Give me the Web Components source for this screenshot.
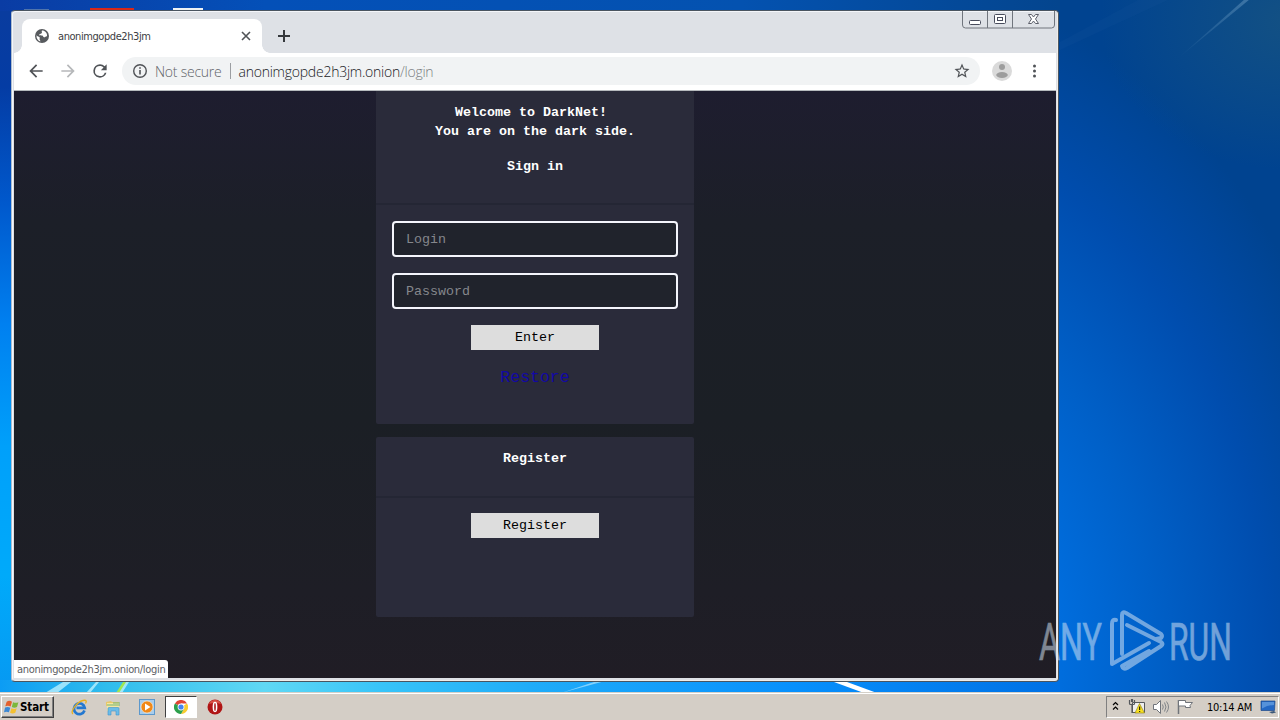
<!DOCTYPE html>
<html lang="en">
<head>
<meta charset="utf-8">
<title>Desktop</title>
<style>
  body {
    margin: 0;
    width: 1280px;
    height: 720px;
    overflow: hidden;
    font-family: "DejaVu Sans Condensed", "DejaVu Sans", sans-serif;
  }
</style>
</head>
<body>
<win-desktop>
  <browser-window slot="window" status="anonimgopde2h3jm.onion/login">
    <browser-tab slot="tab">anonimgopde2h3jm</browser-tab>
    <address-bar slot="address" label="Not secure" host="anonimgopde2h3jm.onion" path="/login"></address-bar>
    <login-page>
      <form-card class="signin">
        <div slot="head">Welcome to DarkNet!&nbsp;<br>You are on the dark side.</div>
        <div slot="sub">Sign in</div>
        <form-field placeholder="Login"></form-field>
        <form-field placeholder="Password"></form-field>
        <form-button>Enter</form-button>
        <a slot="link">Restore</a>
      </form-card>
      <form-card class="register">
        <div slot="head">Register</div>
        <form-button>Register</form-button>
      </form-card>
    </login-page>
  </browser-window>
  <run-mark slot="mark"></run-mark>
  <task-bar slot="taskbar" time="10:14 AM"></task-bar>
</win-desktop>

<script>
/** Small base class: every element renders its own styles and markup. */
class BaseElement extends HTMLElement {
  constructor() {
    super();
    this.attachShadow({ mode: 'open' });
  }

  connectedCallback() {
    this.shadowRoot.innerHTML = `<style>${this.getStyles()}</style>${this.getMarkup()}`;
  }
}

class WinDesktop extends BaseElement {
  getStyles() {
    return `
      :host {
        display: flex;
        flex-direction: column;
        position: relative;
        width: 1280px;
        height: 720px;
        overflow: hidden;
        background:
          radial-gradient(ellipse 190px 150px at 1290px 20px, rgba(24, 84, 128, 0.8), transparent),
          radial-gradient(ellipse 500px 680px at 880px 660px, #0084f4 0%, #0070e2 32%, #0060c8 55%, #004dae 78%, #004390 100%);
      }
      .wall { position: absolute; left: 0; top: 0; }
      .space { flex: 1; position: relative; }
      ::slotted([slot="window"]) { position: absolute; left: 11px; top: 10px; }
      ::slotted([slot="mark"]) { position: absolute; left: 1036px; top: 606px; }
    `;
  }

  getMarkup() {
    return `
      <svg class="wall" width="1280" height="720">
        <defs>
          <linearGradient id="left" x1="0" y1="0" x2="0" y2="1">
            <stop offset="0" stop-color="#0a3c9e"/><stop offset=".12" stop-color="#043ca4"/>
            <stop offset=".28" stop-color="#0058cc"/><stop offset=".45" stop-color="#0080f0"/>
            <stop offset=".62" stop-color="#00a0fa"/><stop offset=".8" stop-color="#00aafa"/>
            <stop offset="1" stop-color="#0894f0"/>
          </linearGradient>
          <linearGradient id="top">
            <stop offset="0" stop-color="#0a3ca4"/><stop offset=".25" stop-color="#0450b8"/>
            <stop offset=".7" stop-color="#0452b0"/><stop offset="1" stop-color="#04458e"/>
          </linearGradient>
          <linearGradient id="bottom">
            <stop offset="0" stop-color="#0c9cf4"/><stop offset=".1" stop-color="#30bcec"/>
            <stop offset=".25" stop-color="#60d8f4"/><stop offset=".36" stop-color="#38c4f8"/>
            <stop offset=".5" stop-color="#20acf8"/><stop offset=".75" stop-color="#0890fc"/>
            <stop offset="1" stop-color="#0070e4"/>
          </linearGradient>
          <linearGradient id="ray" x1="0" y1="1" x2="1" y2="0">
            <stop offset="0" stop-color="#6c9cc4" stop-opacity="0"/><stop offset="1" stop-color="#6c9cc4" stop-opacity=".5"/>
          </linearGradient>
        </defs>
        <rect width="12" height="720" fill="url(#left)"/>
        <rect width="1060" height="11" fill="url(#top)"/>
        <rect y="680" width="1060" height="14" fill="url(#bottom)"/>
        <path d="M1060 42l78-42h30L1060 50z" fill="#3c7cb4" opacity=".06"/>
        <path d="M1176 60L1245 -1h5z" fill="url(#ray)"/>
        <path d="M45 693l18-11h8l-14 11zM86 693l10-11h3l-9 11zM118 693l7-11h4l-7 11z" fill="#c4f4ff" opacity=".75"/>
        <path d="M116 693l7-11h3l-7 11z" fill="#a0e850"/>
        <path d="M561 693l36-12h8z" fill="#aee4ff" opacity=".7"/>
        <path d="M834 682h13l30 11h-13z" fill="#fff"/>
        <path d="M24 10h25" stroke="#98aab0"/>
        <path d="M90 9h44" stroke="#d82818" stroke-width="2"/>
        <path d="M173 9h30" stroke="#eef2f4" stroke-width="2"/>
      </svg>
      <div class="space"><slot name="window"></slot></div>
      <slot name="taskbar"></slot>
      <slot name="mark"></slot>
    `;
  }
}

class BrowserWindow extends BaseElement {
  getStyles() {
    return `
      :host {
        display: flex;
        flex-direction: column;
        box-sizing: border-box;
        width: 1048px;
        height: 672px;
        padding: 0 2px 3px;
        border: 1px solid #4a5560;
        border-radius: 4px;
        border-left-color: #aebccc;
        background: #dee1e6;
        box-shadow: inset 1px 1px 0 #f4f6fa, inset -1px -1px 0 #f0ece8;
      }
      .strip { display: flex; height: 42px; align-items: flex-end; }
      .plus { width: 14px; height: 14px; margin: 0 0 10px 15px; }
      .controls { margin: 0 1px auto auto; height: 18px; }
      .tools {
        display: flex;
        align-items: center;
        height: 37px;
        box-sizing: border-box;
        padding-left: 12px;
        background: #fff;
        border-bottom: 1px solid #fff;
      }
      .tools svg { flex: none; }
      .tools svg.nav { margin-right: 12px; }
      ::slotted([slot="address"]) { flex: none; margin-right: 12px; }
      .dots { margin-left: 19px; }
      .page {
        flex: 1;
        position: relative;
        display: flex;
        border-top: 1px solid #b6babd;
        overflow: hidden;
      }
      .status {
        position: absolute;
        left: 0;
        bottom: 0;
        height: 18px;
        width: 154px;
        box-sizing: border-box;
        padding-left: 3px;
        border-radius: 0 3px 0 0;
        background: #fff;
        color: #5c6064;
        font-size: 11px;
        line-height: 19px;
        letter-spacing: -0.32px;
        white-space: nowrap;
      }
    `;
  }

  getMarkup() {
    return `
      <div class="strip">
        <slot name="tab"></slot>
        <svg class="plus" viewBox="0 0 14 14"><path d="M7 1v12M1 7h12" stroke="#35383c" stroke-width="2"/></svg>
        <svg class="controls" width="93" height="18" viewBox="0 0 93 18" fill="none">
          <path d="M.5 0v14q0 3 3 3h86q3 0 3-3V0M25.500 0v17M50.500 0v17" stroke="#70757d"/>
          <rect x="7.500" y="9.500" width="11" height="4" rx="1" fill="#fff" stroke="#484c5c"/>
          <rect x="32.500" y="3.500" width="11" height="9" rx="1" fill="#fff" stroke="#484c5c"/>
          <rect x="35.500" y="6.500" width="5" height="3" stroke="#484c5c"/>
          <path d="M66.500 3.500h3l2 2.500 2-2.500h3l-3 4.500 3 4.500h-3l-2-2.500-2 2.500h-3l3-4.500z" fill="#fff" stroke="#5c5f6a"/>
        </svg>
      </div>
      <div class="tools">
        <svg class="nav" width="20" height="20" viewBox="0 0 24 24" fill="#505357"><path d="M20 11H7.830l5.590-5.590L12 4l-8 8 8 8 1.410-1.410L7.830 13H20z"/></svg>
        <svg class="nav" width="20" height="20" viewBox="0 0 24 24" fill="#b6b8ba"><path d="M12 4l-1.410 1.410L16.170 11H4v2h12.170l-5.580 5.590L12 20l8-8z"/></svg>
        <svg class="nav" width="20" height="20" viewBox="0 0 24 24" fill="#505357"><path d="M17.650 6.350A7.960 7.960 0 0 0 12 4a8 8 0 1 0 7.730 10h-2.080A6 6 0 1 1 12 6c1.660 0 3.140.69 4.220 1.780L13 11h7V4z"/></svg>
        <slot name="address"></slot>
        <svg width="20" height="20" viewBox="0 0 20 20">
          <circle cx="10" cy="10" r="10" fill="#dadada"/>
          <circle cx="10" cy="6" r="3" fill="#9d9d9d"/>
          <ellipse cx="10" cy="14" rx="5.800" ry="2.900" fill="#9d9d9d"/>
        </svg>
        <svg class="dots" width="6" height="16" viewBox="0 0 6 16" fill="#505357"><circle cx="3.500" cy="3" r="1.500"/><circle cx="3.500" cy="8" r="1.500"/><circle cx="3.500" cy="13" r="1.500"/></svg>
      </div>
      <div class="page">
        <slot></slot>
        <div class="status">${this.getAttribute('status')}</div>
      </div>
    `;
  }
}

class BrowserTab extends BaseElement {
  getStyles() {
    return `
      :host {
        display: flex;
        align-items: center;
        position: relative;
        box-sizing: border-box;
        width: 240px;
        height: 34px;
        margin-left: 8px;
        padding: 0 10px 0 12px;
        border-radius: 8px 8px 0 0;
        background: #fff;
        color: #3c4043;
        font-size: 11px;
        letter-spacing: -0.43px;
      }
      :host::before, :host::after {
        content: "";
        position: absolute;
        bottom: 0;
        width: 8px;
        height: 8px;
      }
      :host::before { left: -8px; background: radial-gradient(circle at 0 0, transparent 7.5px, #fff 8px); }
      :host::after { right: -8px; background: radial-gradient(circle at 100% 0, transparent 7.5px, #fff 8px); }
      span { flex: 1; margin-left: 8px; }
    `;
  }

  getMarkup() {
    return `
      <svg width="16" height="16" viewBox="0 0 16 16">
        <circle cx="8" cy="8" r="7" fill="#575a5e"/>
        <path d="M8 2.500c-1 1 .8 1.800-.4 2.700C6.500 6 5.300 5.700 5.200 6.700c0 .9 1.900.4 3.200.9 1 .4.500 1.600 1.700 1.700 1.400.2 1.200-1.300 2.900-1.100.5-3-2-5.700-5-5.700zM2.500 7.300c.8 1.600 2.400 1 3.100 2 .6 1-.6 1.600.3 2.600.5.500.4 1.200.5 1.600-2.400-.6-4.200-2.900-3.900-6.200z" fill="#fff"/>
      </svg>
      <span><slot></slot></span>
      <svg width="12" height="12" viewBox="0 0 12 12"><path d="M2 2l8 8M10 2l-8 8" stroke="#505357" stroke-width="1.600"/></svg>
    `;
  }
}

class AddressBar extends BaseElement {
  getStyles() {
    return `
      :host {
        display: flex;
        align-items: center;
        box-sizing: border-box;
        width: 858px;
        height: 28px;
        padding: 0 9px 0 10px;
        border-radius: 14px;
        background: #f1f3f4;
        color: #202124;
        font: 300 14px "Open Sans", "Noto Sans", sans-serif;
        letter-spacing: -0.24px;
        white-space: nowrap;
      }
      .label { margin-left: 7px; color: #5f6368; }
      .rule { width: 1px; height: 16px; margin: 0 8px; background: #9b9ea2; }
      .path { color: #7b7f83; }
      .star { margin-left: auto; }
    `;
  }

  getMarkup() {
    return `
      <svg width="16" height="16" viewBox="0 0 16 16" fill="none" stroke="#505357" stroke-width="1.400">
        <circle cx="8" cy="8" r="6.300"/><path d="M8 7v4.500M8 4.300v1.500" stroke-width="1.600"/>
      </svg>
      <span class="label">${this.getAttribute('label')}</span>
      <span class="rule"></span>
      <span class="host">${this.getAttribute('host')}</span><span class="path">${this.getAttribute('path')}</span>
      <svg class="star" width="18" height="18" viewBox="0 0 24 24" fill="#505357">
        <path d="M22 9.240l-7.190-.62L12 2 9.190 8.630 2 9.240l5.460 4.730L5.820 21 12 17.270 18.180 21l-1.630-7.030zM12 15.400l-3.760 2.270 1-4.280-3.320-2.880 4.380-.38L12 6.100l1.710 4.040 4.380.38-3.320 2.880 1 4.280z"/>
      </svg>
    `;
  }
}

class LoginPage extends BaseElement {
  getStyles() {
    return `
      :host {
        flex: 1;
        display: flex;
        flex-direction: column;
        align-items: center;
        gap: 13px;
        background: linear-gradient(#1e1d2f 0, #1c1f28 130px, #1b1f25 330px, #1e1e26 500px, #201d25 100%);
        font-family: "Liberation Mono", "Courier New", monospace;
        font-size: 13.333px;
      }
    `;
  }

  getMarkup() {
    return `<slot></slot>`;
  }
}

class FormCard extends BaseElement {
  getStyles() {
    return `
      :host {
        display: flex;
        flex-direction: column;
        width: 318px;
        background: #2a2b3a;
        border-radius: 0 0 2px 2px;
      }
      :host(.signin) { height: 333px; }
      :host(.register) { height: 180px; border-radius: 2px; }
      header {
        box-sizing: border-box;
        height: 114px;
        padding-top: 12px;
        border-bottom: 2px solid #242634;
        color: #fff;
        font-weight: bold;
        line-height: 19px;
        text-align: center;
      }
      :host(.register) header { height: 61px; }
      ::slotted([slot="sub"]) { margin-top: 16px; }
      .body {
        display: flex;
        flex-direction: column;
        align-items: center;
        gap: 16px;
        padding-top: 16px;
      }
      :host(.register) .body { padding-top: 15px; }
      ::slotted([slot="link"]) { margin-top: 2px; color: #1208a4; font-size: 16.500px; line-height: 20px; }
    `;
  }

  getMarkup() {
    return `
      <header><slot name="head"></slot><slot name="sub"></slot></header>
      <div class="body"><slot></slot><slot name="link"></slot></div>
    `;
  }
}

class FormField extends BaseElement {
  getStyles() {
    return `
      :host { display: block; }
      input {
        display: block;
        box-sizing: border-box;
        width: 286px;
        height: 36px;
        padding: 0 12px;
        border: 2px solid #f4f5fc;
        border-radius: 4px;
        background: #20232c;
        color: #fff;
        font: inherit;
      }
      input::placeholder { color: #85878c; }
    `;
  }

  getMarkup() {
    return `<input placeholder="${this.getAttribute('placeholder')}">`;
  }
}

class FormButton extends BaseElement {
  getStyles() {
    return `
      :host { display: block; }
      button {
        display: block;
        width: 128px;
        height: 25px;
        padding: 0;
        border: 0;
        background: #dddddd;
        color: #000;
        font: inherit;
      }
    `;
  }

  getMarkup() {
    return `<button><slot></slot></button>`;
  }
}

class RunMark extends BaseElement {
  getStyles() {
    return `
      :host { display: block; opacity: 0.53; }
      svg { display: block; }
      text { font: 400 51px Roboto, sans-serif; fill: #d5e4f4; stroke: #d5e4f4; stroke-width: 0.6px; }
    `;
  }

  getMarkup() {
    return `
      <svg width="244" height="72" viewBox="0 0 244 72" overflow="visible">
        <text x="3" y="54" textLength="63" lengthAdjust="spacingAndGlyphs">ANY</text>
        <text x="133" y="54" textLength="63" lengthAdjust="spacingAndGlyphs">RUN</text>
        <g fill="none" stroke="#d5e4f4" stroke-width="4" stroke-linejoin="round" stroke-linecap="round">
          <path d="M80 14q-4-1-4 4v40L113 37"/>
          <path d="M86 48V9q0-4 4-2L125 28q2 2 0 4l-5 1"/>
          <path d="M91 19L125 36q3 2 0 4L91 62q-4 2-5-2L113 45"/>
        </g>
      </svg>
    `;
  }
}

class TaskBar extends BaseElement {
  getStyles() {
    return `
      :host {
        display: flex;
        align-items: center;
        position: relative;
        box-sizing: border-box;
        height: 28px;
        padding: 1px 1px 0 1px;
        border-top: 1px solid #d4d0c8;
        background: #d4cec6;
        box-shadow: inset 0 1px 0 #fff;
        color: #000;
        font-size: 11px;
      }
      .start {
        display: flex;
        align-items: center;
        box-sizing: border-box;
        width: 53px;
        height: 22px;
        padding-left: 2px;
        border: 1px solid;
        border-color: #fff #404040 #404040 #fff;
        box-shadow: inset -1px -1px 0 #808080;
        font-size: 11.5px;
        font-weight: bold;
        letter-spacing: -0.1px;
      }
      .apps { display: flex; align-items: center; margin-left: 17px; }
      .apps svg { display: block; margin-right: 17px; }
      .active {
        display: flex;
        align-items: center;
        justify-content: center;
        box-sizing: border-box;
        width: 32px;
        height: 22px;
        margin: 0 10px 0 -8px;
        border: 1px solid;
        border-color: #404040 #fff #fff #404040;
        background: #fff;
      }
      .apps .active svg { margin: 0; }
      .tray {
        display: flex;
        align-items: center;
        box-sizing: border-box;
        width: 173px;
        height: 22px;
        margin-left: auto;
        border: 1px solid;
        border-color: #808080 #fff #fff #808080;
      }
      .time { margin-left: 14px; width: 47px; letter-spacing: -0.25px; white-space: nowrap; }
      .peek { margin-left: 5px; }
    `;
  }

  getMarkup() {
    return `
      <div class="start">
        <svg width="16" height="16" viewBox="0 0 15 15">
          <path d="M2.500 2.500q2.500-1.500 5 0L6.200 7q-2.500-1.400-5-.2z" fill="#e4602c"/>
          <path d="M8.500 3q2.500 1.200 5 0l-1.300 4.500q-2.400 1.300-4.900 0z" fill="#7cb83c"/>
          <path d="M1 8q2.500-1.300 4.900.2L4.600 12.500q-2.400-1.300-4.600 0z" fill="#3c88d4"/>
          <path d="M7 8.700q2.500 1.200 4.900 0L10.600 13q-2.500 1.300-4.900 0z" fill="#f4c030"/>
        </svg>Start
      </div>
      <div class="apps">
        <svg width="17" height="17" viewBox="0 0 17 17">
          <path d="M13.500 11.500A5.400 5.400 0 1 1 13.700 8.800H5.500" fill="none" stroke="#2478d0" stroke-width="2.700"/>
          <path d="M2 15C-1.500 13 6 3 12 1.500c4-1 3.500 1.500 2.500 3" fill="none" stroke="#e8b020" stroke-width="1.300"/>
        </svg>
        <svg width="17" height="17" viewBox="0 0 17 17">
          <path d="M1 3l5-1 1 1h7v4H1z" fill="#e8c868"/><path d="M2 4h12v8H2z" fill="#f6e6a0"/>
          <path d="M8 4h7M2 6h13" stroke="#70b478"/>
          <path d="M3 16V9.500q0-1 1-1h9q1 0 1 1V16h-3v-4H6v4z" fill="#6cbce8" stroke="#3c94cc" stroke-width=".6"/>
        </svg>
        <svg width="17" height="17" viewBox="0 0 17 17">
          <rect x=".5" y=".5" width="15" height="15" fill="#a8cdec" stroke="#5c98cc"/>
          <circle cx="8" cy="8" r="6" fill="#f08818" stroke="#fff0d8" stroke-width=".6"/><path d="M6 4.500v7L11.500 8z" fill="#fff"/>
        </svg>
        <div class="active">
          <svg width="14" height="14" viewBox="0 0 14 14">
            <path d="M7 7L.9 3.500A7 7 0 0 1 13.100 3.500H7z" fill="#e04434"/>
            <path d="M7 7h0L13.100 3.500A7 7 0 0 1 7 14l3-5.300z" fill="#f8cc30"/>
            <path d="M7 7L.9 3.500A7 7 0 0 0 7 14l3-5.300z" fill="#2ca04c"/>
            <circle cx="7" cy="7" r="3.400" fill="#fff"/><circle cx="7" cy="7" r="2.600" fill="#4484f0"/>
          </svg>
        </div>
        <svg width="16" height="16" viewBox="0 0 16 16">
          <circle cx="8" cy="8" r="7.500" fill="#b01414"/><path d="M2 5a6.500 6.500 0 0 1 12 0q-6-2-12 0z" fill="#e86858" opacity=".7"/>
          <ellipse cx="8" cy="8" rx="2.400" ry="5.200" fill="#fff"/><ellipse cx="8" cy="8" rx=".8" ry="4" fill="#a81010"/>
        </svg>
      </div>
      <div class="tray">
        <svg width="86" height="20" viewBox="0 0 86 20" fill="none">
          <path d="M6 8l2.500-2.500L11 8M6 12.500L8.500 10l2.500 2.500M6.500 7.500l2-2 2 2M6.500 12l2-2 2 2" stroke="#000" stroke-width="1.200"/>
          <path d="M25.500 5.500h12v10h-12z" fill="#eee" stroke="#55585c"/>
          <path d="M22.500 3v3.500q0 1 1 1h3q1 0 1-1V3M24.500 2v3M25.500 2v3M25 8v7.500h4" stroke="#55585c" stroke-width="1.200"/>
          <path d="M32.500 6.500L37.500 16h-9.500z" fill="#f8e020" stroke="#8c7c10" stroke-width=".6"/><path d="M32.700 9.500v3.500M32.700 14v1" stroke="#000"/>
          <path d="M46.500 7.500h3l4-4v13l-4-4h-3z" fill="#fff" stroke="#70747a"/>
          <path d="M55.500 7.500q1.500 2.500 0 5M57.500 5.500q3 4.500 0 9M59.500 4.500q4 5.500 0 11" stroke="#808488"/>
          <path d="M71.500 3v14" stroke="#70747a" stroke-width="1.500"/>
          <path d="M71.500 3.500h7v2h7l-2.500 3 .5 2h-5v-1.500h-7z" fill="#fff" stroke="#70747a"/>
        </svg>
        <span class="time">${this.getAttribute('time')}</span>
        <svg class="peek" width="18" height="16" viewBox="0 0 18 16">
          <path d="M2 2h14l-.5 9.500H2z" fill="#2468c4" stroke="#1c4888" stroke-width=".7"/>
          <path d="M3 3h12v3Q9 6 3 9.500z" fill="#6ca4e4" opacity=".7"/>
          <path d="M10 13l5-1 2 1.500-4 1z" fill="#3c5878"/>
        </svg>
      </div>
    `;
  }
}

customElements.define('win-desktop', WinDesktop);
customElements.define('browser-window', BrowserWindow);
customElements.define('browser-tab', BrowserTab);
customElements.define('address-bar', AddressBar);
customElements.define('login-page', LoginPage);
customElements.define('form-card', FormCard);
customElements.define('form-field', FormField);
customElements.define('form-button', FormButton);
customElements.define('run-mark', RunMark);
customElements.define('task-bar', TaskBar);
</script>
</body>
</html>
